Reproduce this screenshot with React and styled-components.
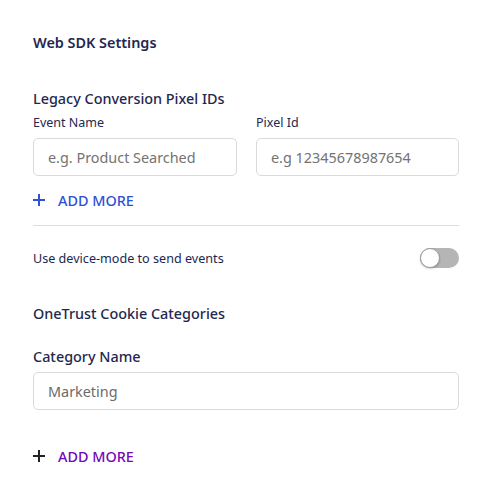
import React, { useState } from "react";
import styled, { createGlobalStyle } from "styled-components";

const GlobalStyle = createGlobalStyle`
  body {
    margin: 0;
    background: #ffffff;
    font-family: "Noto Sans", "Open Sans", sans-serif;
  }
`;

const Page = styled.div`
  width: 426px;
  padding: 33px 0 0 33px;
  display: flex;
  flex-direction: column;
  color: #232750;
`;

const Title = styled.div`
  font-size: 14.4px;
  line-height: 20px;
  font-weight: 600;
`;

const Heading = styled.div`
  font-size: 14.4px;
  line-height: 20px;
  font-weight: 500;
  margin-top: ${(p) => p.gap}px;
`;

const Label = styled.div`
  font-size: ${(p) => (p.big ? 14.4 : 12.5)}px;
  line-height: ${(p) => (p.big ? 20 : 16)}px;
  font-weight: ${(p) => (p.big ? 500 : 400)};
  margin-top: ${(p) => p.gap}px;
  margin-bottom: ${(p) => p.below}px;
`;

const Grid = styled.div`
  display: grid;
  grid-template-columns: 204px 203px;
  column-gap: 19px;
  margin-top: 6px;
`;

const Field = styled.div`
  display: flex;
  flex-direction: column;
`;

const Input = styled.input`
  box-sizing: border-box;
  height: 38px;
  width: 100%;
  border: 1px solid #dadada;
  border-radius: 5px;
  padding: 0 14px;
  font-family: "Noto Sans", "Open Sans", sans-serif;
  font-size: 14.4px;
  color: #6b6b6b;
  outline: none;
  &::placeholder {
    color: #737373;
  }
`;

const AddMore = styled.button`
  display: flex;
  align-items: center;
  gap: 13px;
  height: 20px;
  margin-top: ${(p) => p.gap}px;
  padding: 0;
  border: none;
  background: none;
  font-family: "Noto Sans", "Open Sans", sans-serif;
  font-size: 14.4px;
  font-weight: 500;
  color: ${(p) => p.color};
  cursor: pointer;
  align-self: flex-start;
`;

const Divider = styled.hr`
  margin: 15px 0 0;
  border: none;
  border-top: 1px solid #dedede;
`;

const ToggleRow = styled.div`
  display: flex;
  justify-content: space-between;
  align-items: center;
  height: 20px;
  margin-top: 22px;
  font-size: 12.6px;
`;

const Track = styled.button`
  position: relative;
  width: 39px;
  height: 20px;
  padding: 0;
  border: none;
  border-radius: 10px;
  background: ${(p) => (p.on ? "#3454d1" : "#b5b5b5")};
  cursor: pointer;
`;

const Knob = styled.span`
  position: absolute;
  top: 0;
  left: ${(p) => (p.on ? 19 : 0)}px;
  width: 20px;
  height: 20px;
  border-radius: 50%;
  box-sizing: border-box;
  background: #ffffff;
  border: 1px solid #9a9a9a;
  box-shadow: 0 1px 2px rgba(0, 0, 0, 0.2);
`;

function Plus({ color }) {
  return (
    <svg width="12" height="12" viewBox="0 0 12 12">
      <path d="M6 0v12M0 6h12" stroke={color} strokeWidth="2" />
    </svg>
  );
}

function App() {
  const [deviceMode, setDeviceMode] = useState(false);
  return (
    <Page>
      <GlobalStyle />
      <Title>Web SDK Settings</Title>
      <Heading gap={36}>Legacy Conversion Pixel IDs</Heading>
      <Grid>
        <Field>
          <Label below={7}>Event Name</Label>
          <Input placeholder="e.g. Product Searched" />
        </Field>
        <Field>
          <Label below={7}>Pixel Id</Label>
          <Input placeholder="e.g 12345678987654" />
        </Field>
      </Grid>
      <AddMore gap={14} color="#2f50d6">
        <Plus color="#2f50d6" />
        ADD MORE
      </AddMore>
      <Divider />
      <ToggleRow>
        <span>Use device-mode to send events</span>
        <Track on={deviceMode} onClick={() => setDeviceMode(!deviceMode)}>
          <Knob on={deviceMode} />
        </Track>
      </ToggleRow>
      <Heading gap={36}>OneTrust Cookie Categories</Heading>
      <Label big gap={23} below={5}>
        Category Name
      </Label>
      <Input defaultValue="Marketing" />
      <AddMore gap={36} color="#7408b8">
        <Plus color="#222222" />
        ADD MORE
      </AddMore>
    </Page>
  );
}

export default App;
